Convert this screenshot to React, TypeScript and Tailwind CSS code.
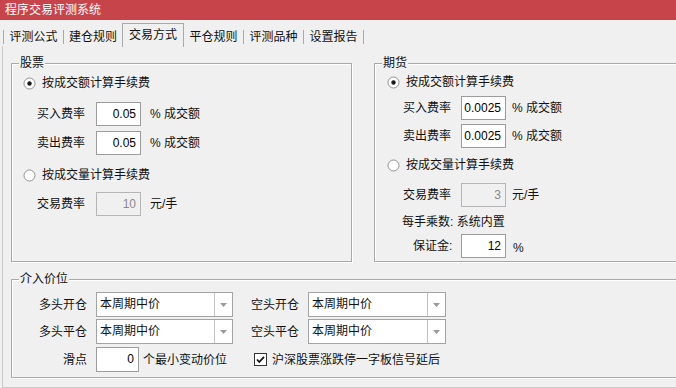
import React from "react";

const tabs = ["评测公式", "建仓规则", "交易方式", "平仓规则", "评测品种", "设置报告"];

function Radio({ checked }: { checked?: boolean }) {
  return (
    <svg width="13" height="13" viewBox="0 0 13 13" className="shrink-0">
      <circle cx="6.5" cy="6.5" r="5.5" fill="#ffffff" stroke="#8e8f8f" />
      {checked && <circle cx="6.5" cy="6.5" r="2.2" fill="#1a1a1a" />}
    </svg>
  );
}

function CheckBox() {
  return (
    <svg width="13" height="13" viewBox="0 0 13 13" className="shrink-0">
      <rect x="0.5" y="0.5" width="12" height="12" fill="#ffffff" stroke="#333333" />
      <path d="M3 6.5 L5.3 9 L10 3.8" fill="none" stroke="#111111" strokeWidth="1.8" />
    </svg>
  );
}

function TextBox({ value, disabled, w = "w-[45px]" }: { value: string; disabled?: boolean; w?: string }) {
  return (
    <div
      className={`${w} h-[24px] shrink-0 border text-right pr-[4px] leading-[22px] ${
        disabled ? "bg-[#f0f0f0] border-[#b5b5b5] text-[#8a8a8a]" : "bg-white border-[#9c9c9c] text-black"
      }`}
    >
      {value}
    </div>
  );
}

function Combo({ w }: { w: string }) {
  return (
    <div className={`${w} h-[25px] shrink-0 flex border border-[#a3a3a3] bg-white`}>
      <span className="flex-1 pl-[3px] leading-[23px]">本周期中价</span>
      <div className="w-[18px] border-l border-[#c4c4c4] flex items-center justify-center">
        <svg width="7" height="4" viewBox="0 0 7 4">
          <polygon points="0,0 7,0 3.5,4" fill="#9a9a9a" />
        </svg>
      </div>
    </div>
  );
}

function Group({ title, className, children }: { title: string; className: string; children: React.ReactNode }) {
  return (
    <div className={`relative shrink-0 border border-[#a9a9a9] shadow-[1px_1px_0_#ffffff,inset_1px_1px_0_#ffffff] ${className}`}>
      <span className="absolute left-[7px] -top-[9px] bg-[#f0f0f0] px-[1px] leading-[16px]">{title}</span>
      {children}
    </div>
  );
}

export default function App() {
  return (
    <div className="w-[676px] h-[388px] overflow-hidden bg-[#f0f0f0] text-[12px] text-[#111] font-['Liberation_Sans','Noto_Sans_CJK_SC',sans-serif]">
      {/* title bar */}
      <div className="h-[20px] bg-[#c8444b] text-white leading-[20px] pl-[5px]">程序交易评测系统</div>

      {/* tab strip */}
      <div className="h-[26px] flex pl-[3px]">
        {tabs.map((t, i) =>
          i === 2 ? (
            <div
              key={t}
              className="mt-[3px] w-[62px] h-[24px] border-l border-t border-r border-[#a9a9a9] flex items-start justify-center pt-[3px] leading-[16px]"
            >
              {t}
            </div>
          ) : (
            <div key={t} className="flex items-start">
              {i !== 3 && <div className="mt-[10px] w-px h-[14px] bg-[#a9a9a9]" />}
              <div className={`${i === 1 ? "w-[58px]" : "w-[59px]"} pt-[9px] text-center leading-[16px]`}>{t}</div>
              {i === 5 && <div className="mt-[10px] w-px h-[14px] bg-[#a9a9a9]" />}
            </div>
          )
        )}
      </div>

      {/* tab page */}
      <div className="ml-[2px] h-[342px] border-l border-b border-[#c9c9c9] pl-[8px] pt-[17px]">
        <div className="flex">
          <Group title="股票" className="w-[341px] h-[199px]">
            <div className="flex flex-col">
              <div className="mt-[11px] h-[16px] flex items-center pl-[11px] gap-[6px]">
                <Radio checked />
                <span>按成交额计算手续费</span>
              </div>
              <div className="mt-[11px] flex items-center pl-[25px]">
                <span className="w-[59px]">买入费率</span>
                <TextBox value="0.05" />
                <span className="ml-[9px]">% 成交额</span>
              </div>
              <div className="mt-[5px] flex items-center pl-[25px]">
                <span className="w-[59px]">卖出费率</span>
                <TextBox value="0.05" />
                <span className="ml-[9px]">% 成交额</span>
              </div>
              <div className="mt-[12px] h-[16px] flex items-center pl-[11px] gap-[6px]">
                <Radio />
                <span>按成交量计算手续费</span>
              </div>
              <div className="mt-[9px] flex items-center pl-[25px]">
                <span className="w-[59px]">交易费率</span>
                <TextBox value="10" disabled />
                <span className="ml-[9px]">元/手</span>
              </div>
            </div>
          </Group>

          <Group title="期货" className="ml-[22px] w-[320px] h-[199px]">
            <div className="flex flex-col">
              <div className="mt-[10px] h-[16px] flex items-center pl-[12px] gap-[6px]">
                <Radio checked />
                <span>按成交额计算手续费</span>
              </div>
              <div className="mt-[6px] flex items-center pl-[28px]">
                <span className="w-[58px]">买入费率</span>
                <TextBox value="0.0025" />
                <span className="ml-[6px]">% 成交额</span>
              </div>
              <div className="mt-[4px] flex items-center pl-[28px]">
                <span className="w-[58px]">卖出费率</span>
                <TextBox value="0.0025" />
                <span className="ml-[6px]">% 成交额</span>
              </div>
              <div className="mt-[9px] h-[16px] flex items-center pl-[12px] gap-[6px]">
                <Radio />
                <span>按成交量计算手续费</span>
              </div>
              <div className="mt-[10px] flex items-center pl-[28px]">
                <span className="w-[58px]">交易费率</span>
                <TextBox value="3" disabled />
                <span className="ml-[6px]">元/手</span>
              </div>
              <div className="mt-[7px] h-[16px] leading-[16px] pl-[27px]">每手乘数: 系统内置</div>
              <div className="mt-[4px] flex items-center pl-[38px]">
                <span className="w-[48px]">保证金:</span>
                <TextBox value="12" />
                <span className="ml-[7px] mt-[3px]">%</span>
              </div>
            </div>
          </Group>
        </div>

        <Group title="介入价位" className="mt-[17px] w-[700px] h-[99px]">
          <div className="flex flex-col">
            <div className="mt-[12px] flex items-center">
              <span className="w-[75px] text-right">多头开仓</span>
              <div className="ml-[9px]">
                <Combo w="w-[137px]" />
              </div>
              <span className="ml-[18px] w-[48px]">空头开仓</span>
              <div className="ml-[9px]">
                <Combo w="w-[138px]" />
              </div>
            </div>
            <div className="mt-[2px] flex items-center">
              <span className="w-[75px] text-right">多头平仓</span>
              <div className="ml-[9px]">
                <Combo w="w-[137px]" />
              </div>
              <span className="ml-[18px] w-[48px]">空头平仓</span>
              <div className="ml-[9px]">
                <Combo w="w-[138px]" />
              </div>
            </div>
            <div className="mt-[3px] flex items-center">
              <span className="w-[75px] text-right">滑点</span>
              <div className="ml-[9px]">
                <TextBox value="0" w="w-[43px] !h-[25px] !leading-[23px]" />
              </div>
              <span className="ml-[4px] w-[90px]">个最小变动价位</span>
              <div className="ml-[21px] flex items-center gap-[5px]">
                <CheckBox />
                <span>沪深股票涨跌停一字板信号延后</span>
              </div>
            </div>
          </div>
        </Group>
      </div>
    </div>
  );
}
